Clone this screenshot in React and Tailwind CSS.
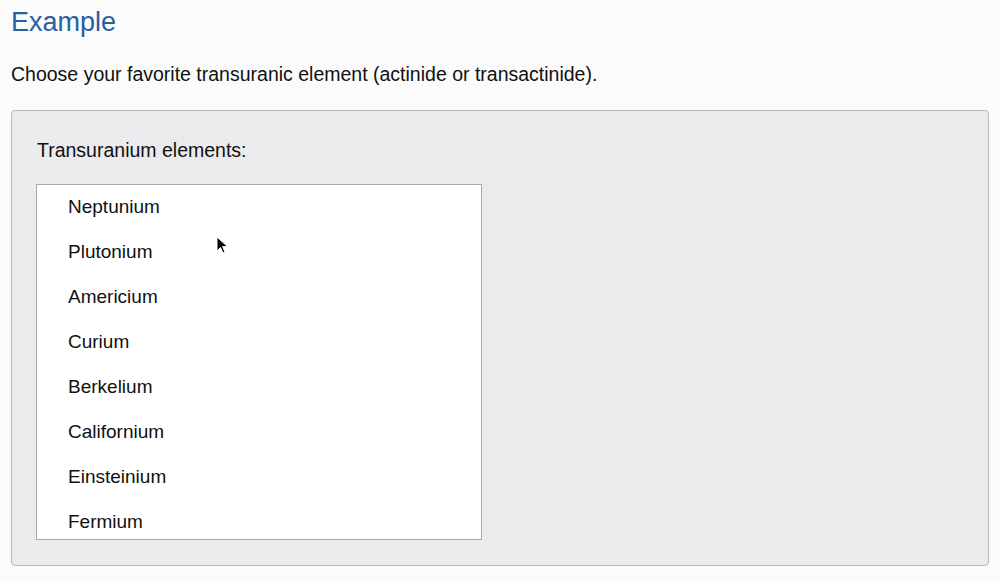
import React from 'react';

const elements = [
  'Neptunium',
  'Plutonium',
  'Americium',
  'Curium',
  'Berkelium',
  'Californium',
  'Einsteinium',
  'Fermium',
];

const Cursor = () => (
  <svg
    className="absolute left-[216px] top-[236px] z-10"
    width="14"
    height="20"
    viewBox="0 0 14 20"
  >
    <path
      d="M1 1 L1 15 L4.5 11.5 L7 17 L9 16 L6.6 10.6 L11.5 10.6 Z"
      fill="#000"
      stroke="#fff"
      strokeWidth="1"
      strokeLinejoin="round"
    />
  </svg>
);

export default function App() {
  return (
    <div className="relative w-[1000px] h-[582px] bg-[#fbfbfb] overflow-hidden font-['Liberation_Sans',Arial,sans-serif] text-[#111]">
      <div className="px-[11px]">
        <h1 className="text-[27px] leading-[44px] text-[#2760a0]">Example</h1>
        <p className="mt-[17px] text-[19.5px] leading-[26px]">
          Choose your favorite transuranic element (actinide or transactinide).
        </p>
        <div className="mt-[23px] h-[456px] rounded-[4px] border border-[#b8b7ba] bg-[#ebeaec] px-[24px] pt-[26px]">
          <div className="text-[19.5px] leading-[26px] pl-[1px]">Transuranium elements:</div>
          <ul className="mt-[21px] w-[446px] h-[356px] overflow-hidden border border-[#a9a9ab] bg-white">
            {elements.map((el) => (
              <li key={el} className="h-[45px] flex items-center pl-[31px] text-[19px]">
                {el}
              </li>
            ))}
          </ul>
        </div>
      </div>
      <Cursor />
    </div>
  );
}
